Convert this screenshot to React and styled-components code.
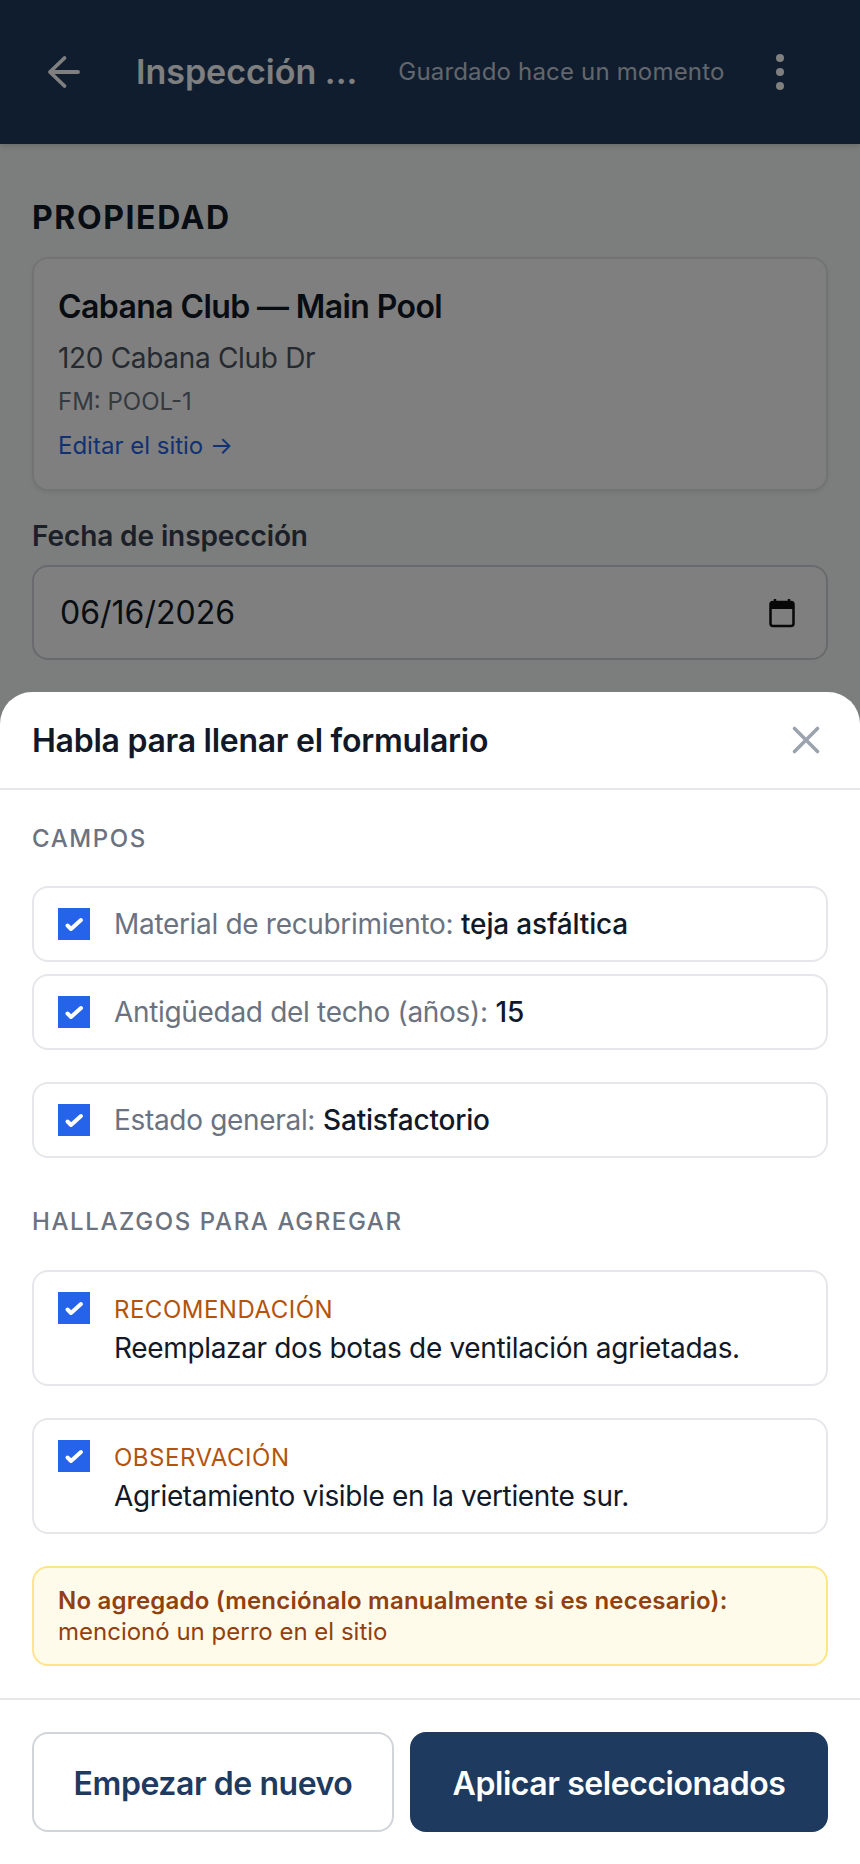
import { createGlobalStyle, styled } from "styled-components";

const GlobalStyle = createGlobalStyle`
  html, body {
    margin: 0;
    padding: 0;
    background: #f9fafb;
  }
  body {
    font-family: Inter, "Liberation Sans", sans-serif;
    color: #111827;
  }
  * {
    box-sizing: border-box;
  }
`;

const fields = [
  { label: "Material de recubrimiento:", value: "teja asfáltica" },
  { label: "Antigüedad del techo (años):", value: "15" },
  { label: "Estado general:", value: "Satisfactorio", gap: true },
];

const findings = [
  { kind: "RECOMENDACIÓN", text: "Reemplazar dos botas de ventilación agrietadas." },
  { kind: "OBSERVACIÓN", text: "Agrietamiento visible en la vertiente sur." },
];

const Check = () => (
  <CheckBox>
    <svg width="32" height="32" viewBox="0 0 32 32" fill="none">
      <path d="M9.5 17.5l3.5 3.5 10-9" stroke="#fff" strokeWidth="4" strokeLinecap="round" strokeLinejoin="round" />
    </svg>
  </CheckBox>
);

const App = () => {
  return (
    <Page>
      <GlobalStyle />
      <TopBar>
        <BackIcon width="36" height="36" viewBox="0 0 36 36" fill="none">
          <path d="M32 18H4M18.5 4 4 18l14.5 14" stroke="currentColor" strokeWidth="3.8" strokeLinecap="round" strokeLinejoin="round" />
        </BackIcon>
        <TopTitle>Inspección ...</TopTitle>
        <SavedText>Guardado hace un momento</SavedText>
        <MoreIcon width="12" height="36" viewBox="0 0 12 36" fill="currentColor">
          <circle cx="6" cy="4" r="4" />
          <circle cx="6" cy="18" r="4" />
          <circle cx="6" cy="32" r="4" />
        </MoreIcon>
      </TopBar>

      <Content>
        <SectionTitle>PROPIEDAD</SectionTitle>
        <PropertyCard>
          <PropertyName>Cabana Club — Main Pool</PropertyName>
          <PropertyAddress>120 Cabana Club Dr</PropertyAddress>
          <PropertyCode>FM: POOL-1</PropertyCode>
          <EditLink>Editar el sitio →</EditLink>
        </PropertyCard>
        <FieldLabel>Fecha de inspección</FieldLabel>
        <DateBox>
          <span>06/16/2026</span>
          <svg width="28" height="30" viewBox="0 0 28 30" fill="none">
            <rect x="2.5" y="4" width="23" height="24" rx="2.5" stroke="#111" strokeWidth="2.5" />
            <path d="M2.5 4h23v7h-23z" fill="#111" />
            <path d="M7 1v4M21 1v4" stroke="#111" strokeWidth="2.5" />
          </svg>
        </DateBox>
      </Content>

      <Overlay />

      <Sheet>
        <SheetHeader>
          <SheetTitle>Habla para llenar el formulario</SheetTitle>
          <svg width="30" height="30" viewBox="0 0 30 30" fill="none">
            <path d="M3.5 3.5l23 23M26.5 3.5l-23 23" stroke="#9ca3af" strokeWidth="3.6" strokeLinecap="round" />
          </svg>
        </SheetHeader>

        <SheetBody>
          <GroupLabel>CAMPOS</GroupLabel>
          <FieldList>
            {fields.map((f) => (
              <FieldRow key={f.label} $gap={f.gap}>
                <Check />
                <FieldText>
                  <FieldName>{f.label}</FieldName> <FieldValue>{f.value}</FieldValue>
                </FieldText>
              </FieldRow>
            ))}
          </FieldList>

          <GroupLabel $second>HALLAZGOS PARA AGREGAR</GroupLabel>
          <FindingList>
            {findings.map((f) => (
              <FindingCard key={f.kind}>
                <Check />
                <FindingText>
                  <FindingKind>{f.kind}</FindingKind>
                  <FindingBody>{f.text}</FindingBody>
                </FindingText>
              </FindingCard>
            ))}
          </FindingList>

          <Notice>
            <NoticeTitle>No agregado (menciónalo manualmente si es necesario):</NoticeTitle>
            <NoticeText>mencionó un perro en el sitio</NoticeText>
          </Notice>
        </SheetBody>

        <SheetFooter>
          <GhostButton>Empezar de nuevo</GhostButton>
          <PrimaryButton>Aplicar seleccionados</PrimaryButton>
        </SheetFooter>
      </Sheet>
    </Page>
  );
};
export default App;

const Page = styled.div`
  position: relative;
  width: 860px;
  height: 1864px;
  overflow: hidden;
  background: #f9fafb;
`;

const TopBar = styled.header`
  height: 144px;
  background: #1e3a5f;
  color: #fff;
  display: flex;
  align-items: center;
  padding: 0 32px 0 46px;
  box-shadow: 0 2px 6px rgba(0, 0, 0, 0.15);
`;

const BackIcon = styled.svg`
  flex: none;
  margin-right: 54px;
`;

const TopTitle = styled.div`
  font-size: 34px;
  font-weight: 600;
  line-height: 40px;
  white-space: nowrap;
`;

const SavedText = styled.div`
  font-size: 24px;
  line-height: 28px;
  letter-spacing: 0.17px;
  color: rgba(255, 255, 255, 0.75);
  margin-left: 41px;
  white-space: nowrap;
`;

const MoreIcon = styled.svg`
  flex: none;
  margin-left: auto;
  margin-right: 42px;
`;

const Content = styled.main`
  padding: 56px 32px 0;
`;

const SectionTitle = styled.h2`
  margin: 0 0 21px;
  font-size: 32px;
  line-height: 36px;
  font-weight: 700;
  letter-spacing: 1.6px;
  color: #111827;
`;

const PropertyCard = styled.section`
  height: 234px;
  background: #fff;
  border: 2px solid #e5e7eb;
  border-radius: 16px;
  padding: 30px 24px;
  box-shadow: 0 2px 4px rgba(0, 0, 0, 0.06);
`;

const PropertyName = styled.div`
  font-size: 32px;
  line-height: 36px;
  font-weight: 600;
  letter-spacing: -0.6px;
  color: #111827;
`;

const PropertyAddress = styled.div`
  margin-top: 16px;
  font-size: 28px;
  line-height: 34px;
  letter-spacing: -0.32px;
  color: #4b5563;
`;

const PropertyCode = styled.div`
  margin-top: 12px;
  font-size: 24px;
  line-height: 30px;
  color: #6b7280;
`;

const EditLink = styled.div`
  margin-top: 14px;
  font-size: 24px;
  line-height: 30px;
  color: #2563eb;
`;

const FieldLabel = styled.div`
  margin-top: 28px;
  font-size: 28px;
  line-height: 34px;
  font-weight: 600;
  letter-spacing: -0.1px;
  color: #374151;
`;

const DateBox = styled.div`
  margin-top: 12px;
  height: 95px;
  background: #fff;
  border: 2px solid #d1d5db;
  border-radius: 16px;
  display: flex;
  align-items: center;
  justify-content: space-between;
  padding: 0 30px 0 26px;
  font-size: 32px;
  color: #111827;
`;

const Overlay = styled.div`
  position: absolute;
  inset: 0;
  background: rgba(0, 0, 0, 0.5);
`;

const Sheet = styled.div`
  position: absolute;
  left: 0;
  right: 0;
  bottom: 0;
  top: 692px;
  background: #fff;
  border-radius: 32px 32px 0 0;
  display: flex;
  flex-direction: column;
`;

const SheetHeader = styled.div`
  height: 98px;
  flex: none;
  display: flex;
  align-items: center;
  justify-content: space-between;
  padding: 0 39px 0 32px;
  border-bottom: 2px solid #e5e7eb;
`;

const SheetTitle = styled.h3`
  margin: 0;
  padding-top: 2px;
  font-size: 32px;
  line-height: 38px;
  font-weight: 600;
  letter-spacing: -0.27px;
  color: #111827;
`;

const SheetBody = styled.div`
  flex: 1;
  padding: 33px 32px 0;
`;

const GroupLabel = styled.div`
  margin-top: ${(p) => (p.$second ? "48px" : "0")};
  font-size: 24px;
  line-height: 32px;
  font-weight: 500;
  letter-spacing: 1.6px;
  color: #6b7280;
`;

const FieldList = styled.div`
  margin-top: 31px;
  display: flex;
  flex-direction: column;
`;

const FieldRow = styled.div`
  height: 76px;
  display: flex;
  align-items: center;
  gap: 24px;
  padding: 0 24px;
  margin-top: ${(p) => (p.$gap ? "32px" : "12px")};
  border: 2px solid #e5e7eb;
  border-radius: 16px;
  background: #fff;
  &:first-child {
    margin-top: 0;
  }
`;

const CheckBox = styled.div`
  flex: none;
  width: 32px;
  height: 32px;
  background: #2563eb;
  display: flex;
`;

const FieldText = styled.div`
  font-size: 28px;
  line-height: 34px;
  white-space: nowrap;
`;

const FieldName = styled.span`
  color: #6b7280;
  letter-spacing: -0.32px;
`;

const FieldValue = styled.span`
  color: #111827;
  font-weight: 500;
  letter-spacing: -0.18px;
`;

const FindingList = styled.div`
  margin-top: 32px;
  display: flex;
  flex-direction: column;
  gap: 32px;
`;

const FindingCard = styled.div`
  height: 116px;
  display: flex;
  align-items: flex-start;
  gap: 24px;
  padding: 20px 24px 0;
  border: 2px solid #e5e7eb;
  border-radius: 16px;
  background: #fff;
`;

const FindingText = styled.div`
  display: flex;
  flex-direction: column;
`;

const FindingKind = styled.div`
  font-size: 24px;
  line-height: 36px;
  letter-spacing: 0.5px;
  color: #b45309;
`;

const FindingBody = styled.div`
  margin-top: 2px;
  font-size: 28px;
  line-height: 36px;
  letter-spacing: -0.34px;
  color: #111827;
`;

const Notice = styled.div`
  margin-top: 32px;
  height: 100px;
  padding: 17px 24px 0;
  background: #fffbeb;
  border: 2px solid #fde68a;
  border-radius: 16px;
`;

const NoticeTitle = styled.div`
  font-size: 24px;
  line-height: 32px;
  font-weight: 600;
  letter-spacing: 0.2px;
  color: #92400e;
`;

const NoticeText = styled.div`
  font-size: 24px;
  line-height: 30px;
  color: #92400e;
`;

const SheetFooter = styled.div`
  flex: none;
  height: 166px;
  border-top: 2px solid #e5e7eb;
  padding: 32px 32px 0;
  display: grid;
  grid-template-columns: 362px 418px;
  gap: 16px;
  align-items: start;
`;

const GhostButton = styled.button`
  height: 100px;
  padding: 3px 0 0;
  background: #fff;
  border: 2px solid #d1d5db;
  border-radius: 16px;
  font: 600 32px/36px Inter, sans-serif;
  letter-spacing: -0.44px;
  color: #1e3a5f;
`;

const PrimaryButton = styled.button`
  height: 100px;
  padding: 3px 0 0;
  background: #1e3a5f;
  border: 0;
  border-radius: 16px;
  font: 600 32px/36px Inter, sans-serif;
  letter-spacing: -0.44px;
  color: #fff;
`;
